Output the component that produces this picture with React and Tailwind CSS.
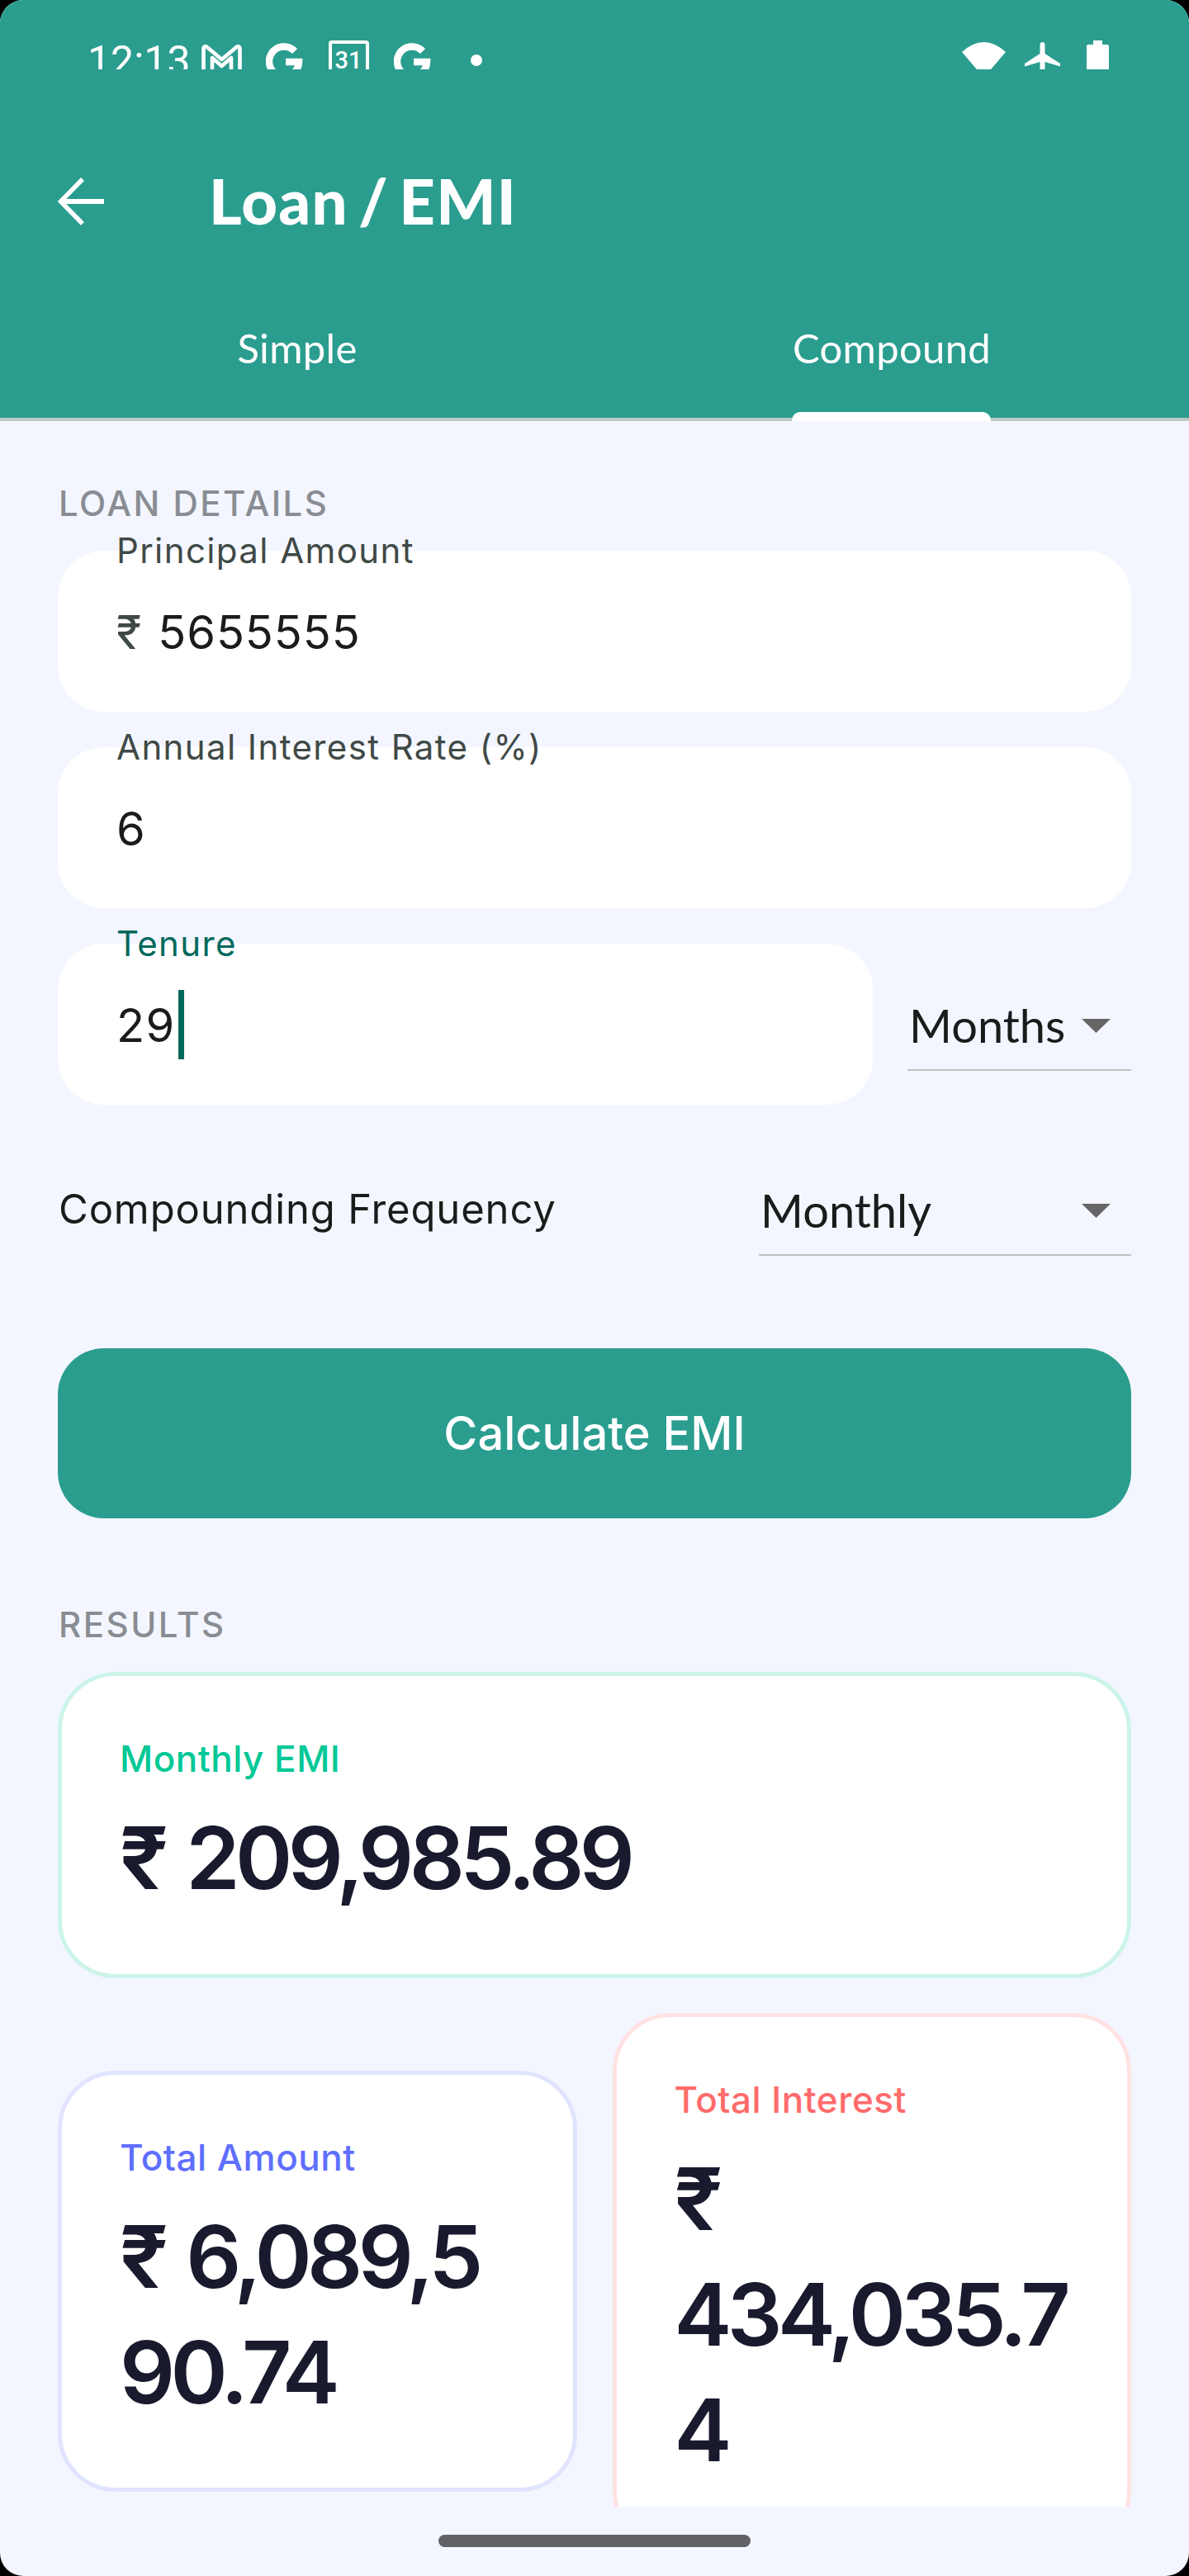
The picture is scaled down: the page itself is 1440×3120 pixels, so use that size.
import React from 'react';

function Triangle() {
  return (
    <svg width="35" height="17" viewBox="0 0 35 17" className="block shrink-0 mt-[5px]">
      <path d="M0 0H35L17.5 17Z" fill="#666666" />
    </svg>
  );
}

function Field({ label, focused, className, children }) {
  return (
    <div className={`relative h-[195px] rounded-[56px] bg-white pl-[71px] flex items-center ${className}`}>
      <span className={`absolute left-[71px] -top-[25px] text-[42px] leading-[50px] tracking-[1.4px] font-normal whitespace-nowrap ${focused ? 'text-[#00695c]' : 'text-[#3f4946]'}`}>
        {label}
      </span>
      {children}
    </div>
  );
}

function Select({ value, className }) {
  return (
    <div className={`h-[112px] flex items-center justify-between border-b-2 border-[#c2c2c2] pr-[25px] pl-[2px] ${className}`}>
      <span className="font-['Lato',sans-serif] text-[56px] leading-[70px] mt-[4px] text-[#191c1b]">{value}</span>
      <Triangle />
    </div>
  );
}

function ResultCard({ label, lines, labelColor, borderColor, className }) {
  return (
    <div className={`rounded-[70px] border-[5px] bg-white p-[70px] ${borderColor} ${className}`}>
      <div className={`text-[44px] leading-[60px] font-medium tracking-[0.5px] whitespace-nowrap ${labelColor}`}>{label}</div>
      <div className="mt-[20px] text-[105px] leading-[140px] font-semibold tracking-[-5.6px] [word-spacing:6px] text-[#1a1a2e] whitespace-nowrap">
        {lines.map((l) => (
          <div key={l}>{l}</div>
        ))}
      </div>
    </div>
  );
}

export default function App() {
  return (
    <div className="w-[1440px] h-[3120px] bg-black font-['Inter',sans-serif]">
      <div className="h-full rounded-[28px] overflow-hidden bg-[#f4f6ff] flex flex-col">
        <header className="h-[506px] shrink-0 bg-[#2a9d8f] text-white">
          <div className="h-[84px] overflow-hidden flex items-start pt-[49px] pl-[106px]">
            <span className="font-['Roboto',sans-serif] text-[50px] leading-[56px] w-[121px] whitespace-nowrap -mt-[3px]">12:13</span>
            <svg width="49" height="44" viewBox="0 0 49 44" fill="none" stroke="white" strokeWidth="4.6" strokeLinejoin="round" className="ml-[17px] mt-[4px] shrink-0">
              <path d="M2.5 44V6Q2.5 2.5 6 3.5L24.5 19L43 3.5Q46.5 2.5 46.5 6V44" />
              <path d="M13 44V17L24.5 27L36 17V44" />
            </svg>
            <svg width="46" height="44" viewBox="0 0 46 44" fill="none" stroke="white" strokeWidth="8.5" className="ml-[29px] mt-[3px] shrink-0">
              <path d="M35 10A18 18 0 1 0 40 23H24" />
            </svg>
            <svg width="49" height="44" viewBox="0 0 49 44" fill="none" className="ml-[30px] shrink-0">
              <path d="M2 44V4Q2 2 4 2H45Q47 2 47 4V44" stroke="white" strokeWidth="4" />
              <text x="24" y="34" textAnchor="middle" fill="white" fontFamily="Roboto" fontWeight="500" fontSize="29">31</text>
            </svg>
            <svg width="46" height="44" viewBox="0 0 46 44" fill="none" stroke="white" strokeWidth="8.5" className="ml-[30px] mt-[3px] shrink-0">
              <path d="M35 10A18 18 0 1 0 40 23H24" />
            </svg>
            <span className="ml-[47px] mt-[17px] w-[14px] h-[14px] rounded-full bg-white shrink-0" />
            <svg width="53" height="44" viewBox="0 0 53 44" className="ml-[581px] mt-[2px] shrink-0">
              <path d="M0 12Q26.5 -12 53 12L26.5 43Z" fill="white" />
            </svg>
            <svg width="43" height="44" viewBox="0 0 43 44" className="ml-[23px] mt-[2px] shrink-0">
              <path d="M21.5 0C19.5 0 18.5 1.5 18.5 3.5V14L0 26V29.5L18.5 24V44H24.5V24L43 29.5V26L24.5 14V3.5C24.5 1.5 23.5 0 21.5 0Z" fill="white" />
            </svg>
            <svg width="27" height="44" viewBox="0 0 27 44" className="ml-[32px] shrink-0">
              <path d="M8 0H19V5H25Q27 5 27 7V44H0V7Q0 5 2 5H8Z" fill="white" />
            </svg>
          </div>
          <div className="mt-[61px] h-[197px] flex items-center pl-[70px]">
            <svg width="56" height="58" viewBox="0 0 56 58" fill="none" stroke="white" strokeWidth="6" className="shrink-0">
              <path d="M56 29H4" />
              <path d="M30 2L3.5 29L30 56" strokeWidth="5.5" />
            </svg>
            <h1 className="ml-[127px] -mt-[2px] font-['Lato',sans-serif] font-black text-[76px] leading-[90px] tracking-[1.2px] [word-spacing:-7px] whitespace-nowrap">Loan / EMI</h1>
          </div>
          <div className="h-[164px] pb-[6px] flex">
            <div className="w-1/2 flex items-center justify-center font-['Lato',sans-serif] text-[49px] tracking-[0.3px] leading-[60px]">Simple</div>
            <div className="w-1/2 flex items-center justify-center font-['Lato',sans-serif] text-[49px] tracking-[0.3px] leading-[60px]">Compound</div>
          </div>
        </header>
        <div className="relative h-[4px] shrink-0 bg-[#bcc9c4]">
          <div className="absolute left-[959px] w-[241px] -top-[7px] h-[11px] rounded-t-[10px] bg-white" />
        </div>
        <main className="flex-1 min-h-0 overflow-hidden px-[70px] pt-[70px]">
          <div className="pl-[1px] text-[42px] leading-[60px] font-medium tracking-[2.5px] text-[#898d93] whitespace-nowrap">LOAN DETAILS</div>
          <Field label="Principal Amount" className="mt-[27px]">
            <span className="mt-[2px] text-[56px] leading-[70px] text-[#3f4946]">₹</span>
            <span className="mt-[2px] ml-[20px] text-[56px] leading-[70px] tracking-[0.9px] text-[#191c1b]">5655555</span>
          </Field>
          <Field label="Annual Interest Rate (%)" className="mt-[43px]">
            <span className="mt-[2px] text-[56px] leading-[70px] tracking-[1.4px] text-[#191c1b]">6</span>
          </Field>
          <div className="mt-[43px] flex items-center">
            <Field label="Tenure" focused className="w-[987px] shrink-0">
              <span className="mt-[2px] text-[56px] leading-[70px] tracking-[1.4px] text-[#191c1b]">29</span>
              <span className="ml-[3px] w-[7px] h-[84px] bg-[#00695c]" />
            </Field>
            <Select value="Months" className="ml-[42px] flex-1" />
          </div>
          <div className="mt-[71px] flex items-center justify-between">
            <span className="pl-[1px] text-[49px] leading-[60px] tracking-[0.85px] text-[#191c1b] whitespace-nowrap">Compounding Frequency</span>
            <Select value="Monthly" className="w-[451px]" />
          </div>
          <div className="mt-[112px] h-[206px] rounded-[56px] bg-[#2a9d8f] flex items-center justify-center text-white text-[56px] leading-[70px] font-medium">
            Calculate EMI
          </div>
          <div className="mt-[98px] pl-[1px] pt-[1px] text-[42px] leading-[60px] font-medium tracking-[2.5px] text-[#898d93] whitespace-nowrap">RESULTS</div>
          <ResultCard label="Monthly EMI" lines={['₹ 209,985.89']} labelColor="text-[#00c896]" borderColor="border-[#ccf4ea]" className="mt-[27px] h-[371px]" />
          <div className="mt-[42px] flex items-center gap-[43px]">
            <ResultCard label="Total Amount" lines={['₹ 6,089,5', '90.74']} labelColor="text-[#5f6fff]" borderColor="border-[#e0e4ff]" className="flex-1 basis-0 min-w-0" />
            <ResultCard label="Total Interest" lines={['₹', '434,035.7', '4']} labelColor="text-[#ff6b6b]" borderColor="border-[#ffe2e2]" className="flex-1 basis-0 min-w-0" />
          </div>
        </main>
        <footer className="h-[84px] shrink-0 pt-[34px] flex justify-center">
          <div className="w-[378px] h-[15px] rounded-full bg-[#616166]" />
        </footer>
      </div>
    </div>
  );
}
